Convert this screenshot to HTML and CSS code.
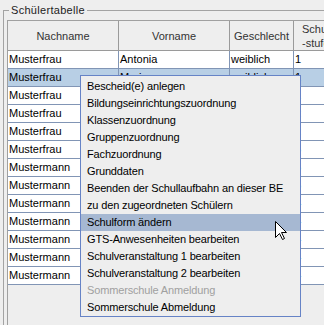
FILE: index.html
```html
<!DOCTYPE html>
<html lang="de">

<head>
    <meta charset="UTF-8">
    <title>Schülertabelle</title>
    <link rel="stylesheet" href="styles.css">
</head>

<body>
    <fieldset class="group">
        <legend>Schülertabelle</legend>
        <div class="scroll">
            <table class="students">
                <tr class="head">
                    <th class="c-last">Nachname</th>
                    <th class="c-first">Vorname</th>
                    <th class="c-sex">Geschlecht</th>
                    <th class="c-level">Schul<br>-stufe</th>
                </tr>
                <tr><td>Musterfrau</td><td>Antonia</td><td>weiblich</td><td>1</td></tr>
                <tr class="selected"><td>Musterfrau</td><td>Maria</td><td>weiblich</td><td>1</td></tr>
                <tr><td>Musterfrau</td><td>Julia</td><td>weiblich</td><td>1</td></tr>
                <tr><td>Musterfrau</td><td>Lena</td><td>weiblich</td><td>2</td></tr>
                <tr><td>Musterfrau</td><td>Sophie</td><td>weiblich</td><td>2</td></tr>
                <tr><td>Musterfrau</td><td>Anna</td><td>weiblich</td><td>3</td></tr>
                <tr><td>Mustermann</td><td>Max</td><td>männlich</td><td>3</td></tr>
                <tr><td>Mustermann</td><td>Paul</td><td>männlich</td><td>3</td></tr>
                <tr><td>Mustermann</td><td>Felix</td><td>männlich</td><td>4</td></tr>
                <tr><td>Mustermann</td><td>Lukas</td><td>männlich</td><td>4</td></tr>
                <tr><td>Mustermann</td><td>Jonas</td><td>männlich</td><td>4</td></tr>
                <tr><td>Mustermann</td><td>Leon</td><td>männlich</td><td>4</td></tr>
                <tr><td>Mustermann</td><td>Tim</td><td>männlich</td><td>4</td></tr>
            </table>
        </div>
    </fieldset>

    <ul class="menu">
        <li>Bescheid(e) anlegen</li>
        <li>Bildungseinrichtungszuordnung</li>
        <li>Klassenzuordnung</li>
        <li>Gruppenzuordnung</li>
        <li>Fachzuordnung</li>
        <li>Grunddaten</li>
        <li>Beenden der Schullaufbahn an dieser BE</li>
        <li>zu den zugeordneten Schülern</li>
        <li class="active">Schulform ändern</li>
        <li>GTS-Anwesenheiten bearbeiten</li>
        <li>Schulveranstaltung 1 bearbeiten</li>
        <li>Schulveranstaltung 2 bearbeiten</li>
        <li class="disabled">Sommerschule Anmeldung</li>
        <li>Sommerschule Abmeldung</li>
    </ul>

    <svg class="cursor" width="14" height="21" viewBox="0 0 14 21">
        <path d="M0.5 0.5 L0.5 16.5 L4.5 12.5 L7.5 18.5 L9.5 17.5 L6.5 11.5 L11.5 11.5 Z" fill="#fff" stroke="#000" stroke-width="1" stroke-linejoin="miter"/>
    </svg>
</body>

</html>
```

FILE: styles.css
```css
body {
    margin: 0;
    width: 324px;
    height: 325px;
    overflow: hidden;
    background-color: #eeeeee;
    font-family: "Liberation Sans", Arial, sans-serif;
    font-size: 11px;
    color: #000;
}

fieldset.group {
    margin: 4px 0 0 3px;
    padding: 3px 0 0 3px;
    width: 400px;
    height: 400px;
    border: 1px solid #a3a3a3;
    min-width: 0;
}

fieldset.group legend {
    margin-left: 2px;
    padding: 0 2px;
    line-height: 13px;
    letter-spacing: 0.3px;
    color: #222;
}

div.scroll {
    border: 1px solid #a0a0a0;
    height: 400px;
    background-color: #eeeeee;
}

table.students {
    table-layout: fixed;
    width: 356px;
    border-collapse: separate;
    border-spacing: 0;
}

table.students th,
table.students td {
    box-sizing: border-box;
    padding: 0 1px;
    white-space: nowrap;
    overflow: hidden;
}

table.students tr.head th {
    height: 30px;
    line-height: 14px;
    font-weight: normal;
    text-align: center;
    vertical-align: middle;
    color: #333;
    background-color: #eeeeee;
    border-right: 1px solid #9a9a9a;
    border-bottom: 1px solid #9a9a9a;
}

th.c-last { width: 111px; }
th.c-first { width: 111px; }
th.c-sex { width: 64px; }
th.c-level { width: 70px; }

table.students tr.head th.c-level {
    text-align: left;
    padding-left: 8px;
}

table.students td {
    height: 18px;
    line-height: 17px;
    text-align: left;
    background-color: #fff;
    border-right: 1px solid #8195b5;
    border-bottom: 1px solid #8195b5;
}

table.students tr.selected td {
    background-color: #b8cfe5;
}

ul.menu {
    position: absolute;
    left: 80px;
    top: 75px;
    width: 221px;
    box-sizing: border-box;
    margin: 0;
    padding: 2px 0 0;
    list-style: none;
    background-color: #eeeeee;
    border: 1px solid #6683c6;
    letter-spacing: -0.15px;
}

ul.menu li {
    height: 17px;
    line-height: 17px;
    padding-left: 6px;
    white-space: nowrap;
}

ul.menu li.active {
    background-color: #a6b8d2;
}

ul.menu li.disabled {
    color: #a0a0a0;
}

svg.cursor {
    position: absolute;
    left: 275px;
    top: 221px;
}
```
